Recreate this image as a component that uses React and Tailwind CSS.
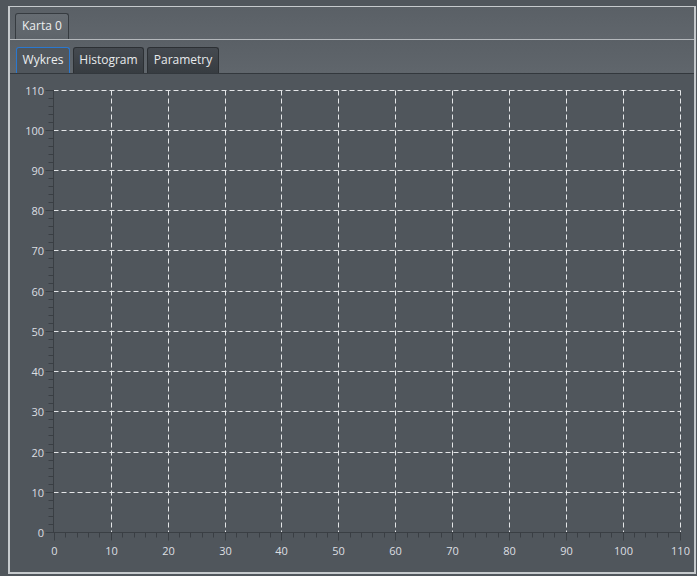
import React from "react";

const W = 684;
const H = 498;
const X0 = 44;
const X1 = 669.5;
const Y0 = 458;
const Y1 = 15.5;
const xs = (i) => X0 + ((X1 - X0) * i) / 110;
const ys = (i) => Y0 - ((Y0 - Y1) * i) / 110;
const px = (v) => Math.round(v) + 0.5;

function Chart() {
  const majors = [];
  for (let i = 0; i <= 110; i += 10) majors.push(i);
  const minors = [];
  for (let i = 0; i <= 110; i += 2) if (i % 10 !== 0) minors.push(i);
  const axis = "#3a3f44";
  const grid = "#e4e6e8";
  const label = "#dcdfe2";
  const ax = px(X0) - 1;
  const ay = px(Y0);
  return (
    <svg width={W} height={H} viewBox={`0 0 ${W} ${H}`} className="block">
      {/* grid */}
      {majors.slice(1).map((i) => (
        <line
          key={"gh" + i}
          x1={ax}
          x2={px(X1)}
          y1={px(ys(i))}
          y2={px(ys(i))}
          stroke={grid}
          strokeWidth="1"
          strokeDasharray="5 3"
        />
      ))}
      {majors.slice(1).map((i) => (
        <line
          key={"gv" + i}
          x1={px(xs(i))}
          x2={px(xs(i))}
          y1={px(Y1)}
          y2={ay}
          stroke={grid}
          strokeWidth="1"
          strokeDasharray="5 3"
        />
      ))}
      {/* axes */}
      <line x1={ax} x2={ax} y1={px(Y1) - 0.5} y2={ay + 0.5} stroke={axis} />
      <line x1={ax - 0.5} x2={px(X1) + 0.5} y1={ay} y2={ay} stroke={axis} />
      {majors.map((i) => (
        <line key={"ymt" + i} x1={ax - 8} x2={ax} y1={px(ys(i))} y2={px(ys(i))} stroke={axis} />
      ))}
      {minors.map((i) => (
        <line key={"ymn" + i} x1={ax - 5} x2={ax} y1={px(ys(i))} y2={px(ys(i))} stroke={axis} />
      ))}
      {majors.map((i) => (
        <line key={"xmt" + i} x1={px(xs(i))} x2={px(xs(i))} y1={ay} y2={ay + 8} stroke={axis} />
      ))}
      {minors.map((i) => (
        <line key={"xmn" + i} x1={px(xs(i))} x2={px(xs(i))} y1={ay} y2={ay + 5} stroke={axis} />
      ))}
      {/* labels */}
      {majors.map((i) => (
        <text
          key={"yl" + i}
          x={34}
          y={px(ys(i)) + 4}
          textAnchor="end"
          fontSize="11"
          fontFamily='"Open Sans", "Noto Sans", sans-serif'
          fill={label}
        >
          {i}
        </text>
      ))}
      {majors.map((i) => (
        <text
          key={"xl" + i}
          x={px(xs(i))}
          y={481}
          textAnchor="middle"
          fontSize="11"
          fontFamily='"Open Sans", "Noto Sans", sans-serif'
          fill={label}
        >
          {i}
        </text>
      ))}
    </svg>
  );
}

function InnerTab({ label, selected, w }) {
  if (selected) {
    return (
      <div
        className={`${w} h-[26px] flex items-center justify-center rounded-t-[3px] border border-b-0 border-[#2a78d0] bg-[#50565c] text-[12px] text-[#eceef0] pb-[1px]`}
      >
        {label}
      </div>
    );
  }
  return (
    <div
      className={`${w} h-[26px] flex items-center justify-center rounded-t-[3px] border border-b-0 border-[#2c3034] bg-gradient-to-b from-[#454a50] to-[#373c41] text-[12px] text-[#e8eaec] pb-[1px]`}
    >
      {label}
    </div>
  );
}

export default function App() {
  return (
    <div className="w-[697px] h-[576px] bg-[#50565c] pl-[8px] pt-[6px] overflow-hidden font-['Open_Sans','Noto_Sans',sans-serif]">
      <div className="w-[688px] h-[568px] border-t border-x-2 border-b-2 border-[#c6cacd] flex flex-col">
        {/* outer tab header */}
        <div className="h-[32px] flex items-end pl-[5px] bg-gradient-to-b from-[#5a6066] to-[#60666c]">
          <div className="w-[54px] h-[26px] flex items-center pl-[6px] rounded-t-[3px] border border-b-0 border-[#363b40] bg-gradient-to-b from-[#666c72] to-[#5e646a] text-[12px] text-[#eceef0] pb-[1px]">
            Karta 0
          </div>
        </div>
        {/* outer content */}
        <div className="flex-1 flex flex-col border-t border-[#b4b8bc] min-h-0">
          <div className="h-[34px] flex items-end gap-[3px] pl-[6px] bg-gradient-to-b from-[#5a6066] to-[#60666c] border-b border-[#33383d]">
            <InnerTab label="Wykres" selected w="w-[54px]" />
            <InnerTab label="Histogram" w="w-[71px]" />
            <InnerTab label="Parametry" w="w-[72px]" />
          </div>
          <div className="flex-1 bg-[#50565c] min-h-0">
            <Chart />
          </div>
        </div>
      </div>
    </div>
  );
}
